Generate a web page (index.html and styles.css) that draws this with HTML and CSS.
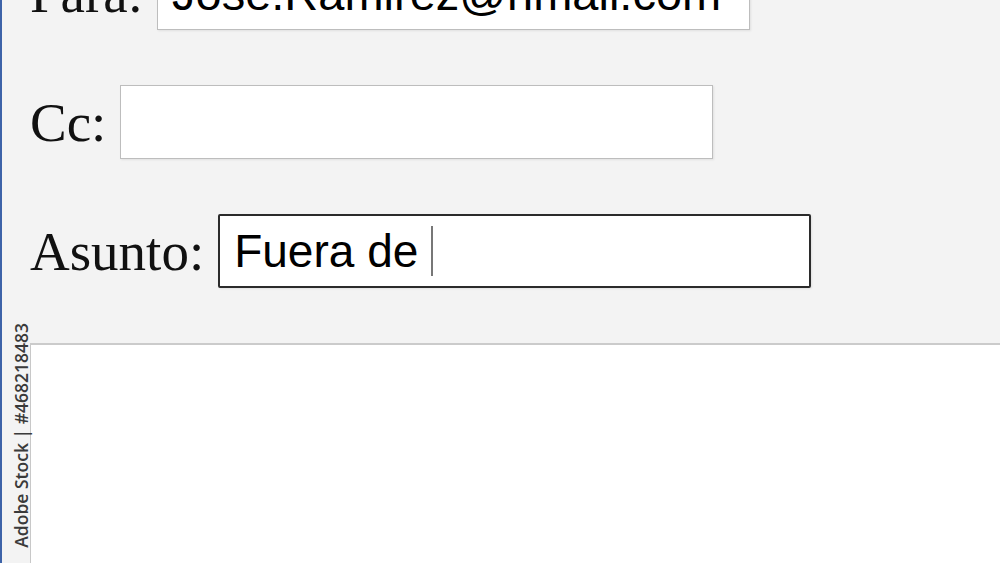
FILE: index.html
```html
<!DOCTYPE html>
<html lang="es">
<head>
    <meta charset="UTF-8">
    <meta name="viewport" content="width=device-width, initial-scale=1.0">
    <title>Mensaje nuevo</title>
    <link rel="stylesheet" href="styles.css">
</head>
<body>
    <div class="window">
        <div class="side-strip">
            <span class="stock-id">Adobe Stock | #468218483</span>
        </div>
        <div class="main">
            <div class="header">
                <div class="form">
                    <div class="row">
                        <label class="label">Para:</label>
                        <div class="field field-to">Jose.Ramirez@hmail.com</div>
                    </div>
                    <div class="row">
                        <label class="label">Cc:</label>
                        <div class="field"></div>
                    </div>
                    <div class="row">
                        <label class="label">Asunto:</label>
                        <div class="field focused">Fuera de&nbsp;<span class="caret"></span></div>
                    </div>
                </div>
            </div>
            <div class="message-body"></div>
        </div>
    </div>
</body>
</html>
```

FILE: styles.css
```css
/* Styling */
body {
    margin: 0;
    height: 100vh;
    overflow: hidden;
    background-color: #f3f3f3;
    font-family: "Liberation Serif", "Times New Roman", serif;
}

.window {
    display: flex;
    height: 100%;
    border-left: 2px solid #3d63a8;
}

.side-strip {
    width: 28px;
    flex-shrink: 0;
    display: flex;
    flex-direction: column;
    justify-content: flex-end;
    align-items: center;
    padding-bottom: 15px;
    box-sizing: border-box;
}

.stock-id {
    writing-mode: vertical-rl;
    transform: rotate(180deg);
    font-family: "Open Sans", sans-serif;
    font-size: 17.5px;
    font-weight: 600;
    line-height: 17px;
    color: #3a3a3a;
    margin-left: 10px;
    white-space: nowrap;
}

.main {
    flex: 1;
    display: flex;
    flex-direction: column;
}

.header {
    height: 345px;
    flex-shrink: 0;
    box-sizing: border-box;
    border-bottom: 2px solid #cbcbcb;
}

.form {
    margin-top: -44px;
    display: flex;
    flex-direction: column;
    gap: 55px;
}

.row {
    display: flex;
    align-items: center;
    height: 74px;
}

.label {
    font-size: 55px;
    color: #111;
    margin-right: 14px;
}

.field {
    width: 593px;
    height: 74px;
    box-sizing: border-box;
    padding: 0 14px;
    display: flex;
    align-items: center;
    background-color: #fff;
    border: 1.5px solid #bdbdbd;
    box-shadow: 1px 1px 2px rgba(0, 0, 0, 0.08);
    font-family: "Liberation Sans", Arial, sans-serif;
    font-size: 46px;
    color: #000;
    white-space: pre;
}

.field-to {
    font-size: 47px;
}

.field.focused {
    border: 2px solid #2b2b2b;
    border-radius: 2px;
    padding-left: 14px;
}

.caret {
    display: inline-block;
    width: 1.5px;
    height: 50px;
    background-color: #777;
}

.message-body {
    flex: 1;
    background-color: #fff;
    border-left: 1px solid #c8c8c8;
}
```
